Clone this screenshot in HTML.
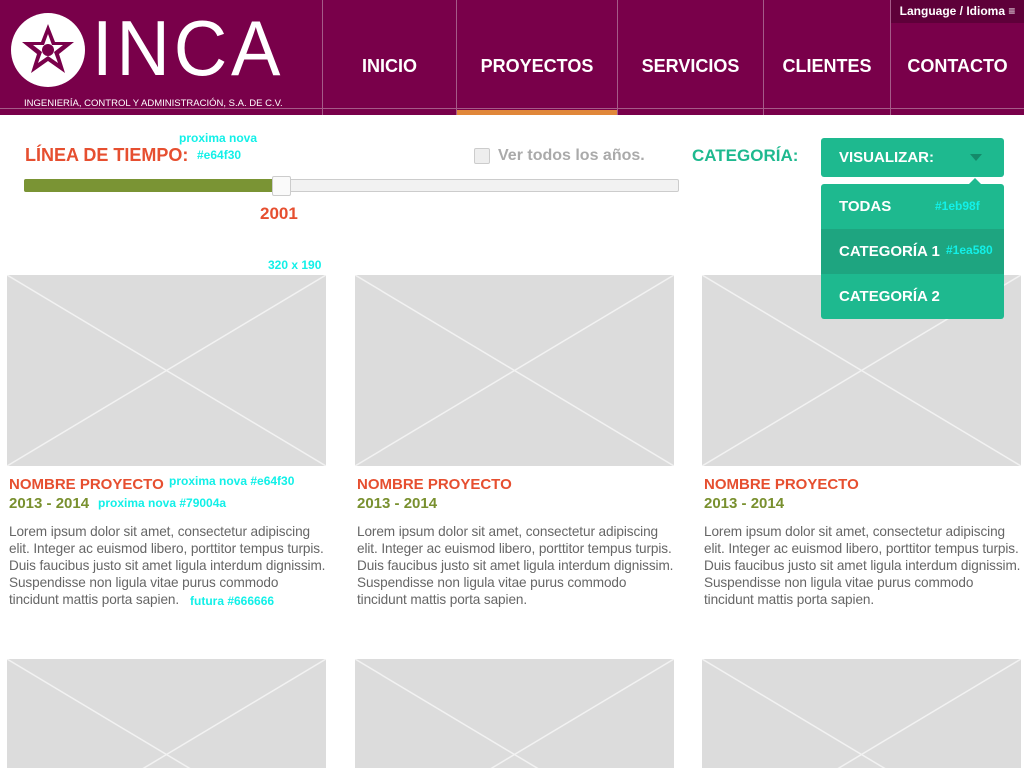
<!DOCTYPE html>
<html><head><meta charset="utf-8"><style>
*{margin:0;padding:0;box-sizing:border-box}
html,body{width:1024px;height:768px;overflow:hidden}
body{background:#fff;font-family:"Liberation Sans",sans-serif;position:relative}
.hdr{position:absolute;left:0;top:0;width:1024px;height:110px;background:#79004a}
.line{position:absolute;left:0;top:108px;width:1024px;height:1px;background:#a55a88}
.sub{position:absolute;left:0;top:109px;width:1024px;height:6px;background:#79004a}
.nav{position:absolute;top:0;height:115px;border-left:1px solid #a55a88;color:#fff;font-weight:bold;font-size:18px;text-align:center;line-height:132px}
.orange{position:absolute;left:457px;top:110px;width:160px;height:5px;background:#e0873a}
.lang{position:absolute;left:891px;top:0;width:133px;height:23px;background:#5e0039;color:#fff;font-size:12px;font-weight:bold;line-height:23px;text-align:center}
.ann{position:absolute;color:#12f0e8;font-size:12px;font-weight:bold;z-index:5}
.img{position:absolute;width:319px;height:191px;background:#dcdcdc;overflow:hidden}
.img.b{height:109px}
.t{position:absolute;color:#e64f30;font-weight:bold;font-size:15px}
.y{position:absolute;color:#79902f;font-weight:bold;font-size:15px}
.p{position:absolute;white-space:nowrap;color:#666;font-size:13.6px;line-height:17px;letter-spacing:-0.1px}
.dd{position:absolute;left:821px;width:183px;height:45px;background:#1eb98f;color:#fff;font-weight:bold;font-size:15px;line-height:45px;padding-left:18px;z-index:4}
</style></head><body>
<div class="hdr"></div><div class="line"></div><div class="sub"></div>
<svg style="position:absolute;left:8px;top:10px" width="80" height="80" viewBox="0 0 80 80">
<circle cx="40" cy="40" r="37" fill="#fff"/>
<polygon points="40,14 47,32 66,32 51,44 57,63 40,51 23,63 29,44 14,32 33,32" fill="#79004a"/>
<polygon points="40,24 44,35 55,35 46,42 50,53 40,46 30,53 34,42 25,35 36,35" fill="#fff"/>
<circle cx="40" cy="40" r="6" fill="#79004a"/>
</svg>
<div style="position:absolute;left:92px;top:6px;color:#fff;font-size:78px;font-weight:normal;letter-spacing:4px;line-height:84px;transform:scaleX(0.95);transform-origin:left">INCA</div>
<div style="position:absolute;left:24px;top:98px;color:#fff;font-size:9.5px">INGENIERÍA, CONTROL Y ADMINISTRACIÓN, S.A. DE C.V.</div>
<div class="nav" style="left:322px;width:134px">INICIO</div>
<div class="nav" style="left:456px;width:161px">PROYECTOS</div>
<div class="nav" style="left:617px;width:146px">SERVICIOS</div>
<div class="nav" style="left:763px;width:127px">CLIENTES</div>
<div class="nav" style="left:890px;width:134px">CONTACTO</div>
<div class="orange"></div>
<div class="lang">Language / Idioma ≡</div>

<div style="position:absolute;left:25px;top:145px;color:#e64f30;font-weight:bold;font-size:18px">LÍNEA DE TIEMPO:</div>
<div class="ann" style="left:179px;top:131px">proxima nova</div>
<div class="ann" style="left:197px;top:148px">#e64f30</div>
<div style="position:absolute;left:474px;top:148px;width:16px;height:16px;border:1px solid #ccc;border-radius:2px;background:#eee"></div>
<div style="position:absolute;left:498px;top:147px;color:#aaa;font-weight:bold;font-size:16px">Ver todos los años.</div>
<div style="position:absolute;left:24px;top:179px;width:655px;height:13px;background:#f2f2f2;border:1px solid #ccc;border-radius:2px"></div>
<div style="position:absolute;left:24px;top:179px;width:258px;height:13px;background:#7a9434;border-radius:2px"></div>
<div style="position:absolute;left:272px;top:176px;width:19px;height:20px;background:#fafafa;border:1px solid #ccc;border-radius:2px"></div>
<div style="position:absolute;left:260px;top:204px;color:#e64f30;font-weight:bold;font-size:17px">2001</div>

<div style="position:absolute;left:692px;top:146px;color:#1eb98f;font-weight:bold;font-size:17px">CATEGORÍA:</div>
<div style="position:absolute;left:821px;top:138px;width:183px;height:39px;background:#1eb98f;border-radius:3px;color:#fff;font-weight:bold;font-size:15px;line-height:39px;padding-left:18px">VISUALIZAR:</div>
<div style="position:absolute;left:970px;top:154px;width:0;height:0;border-left:6px solid transparent;border-right:6px solid transparent;border-top:7px solid #148a6a"></div>
<div style="position:absolute;left:969px;top:178px;width:0;height:0;border-left:6px solid transparent;border-right:6px solid transparent;border-bottom:6px solid #1eb98f"></div>
<div class="dd" style="top:184px;border-radius:3px 3px 0 0">TODAS</div>
<div class="dd" style="top:229px;background:#1ea580">CATEGORÍA 1</div>
<div class="dd" style="top:274px;border-radius:0 0 3px 3px">CATEGORÍA 2</div>
<div class="ann" style="left:935px;top:199px">#1eb98f</div>
<div class="ann" style="left:946px;top:243px">#1ea580</div>

<div class="ann" style="left:268px;top:258px">320 x 190</div>

<div class="img" style="left:7px;top:275px"><svg width="319" height="191"><line x1="0" y1="0" x2="319" y2="191" stroke="#f2f2f2" stroke-width="1.5"/><line x1="319" y1="0" x2="0" y2="191" stroke="#f2f2f2" stroke-width="1.5"/></svg></div>
<div class="img" style="left:355px;top:275px"><svg width="319" height="191"><line x1="0" y1="0" x2="319" y2="191" stroke="#f2f2f2" stroke-width="1.5"/><line x1="319" y1="0" x2="0" y2="191" stroke="#f2f2f2" stroke-width="1.5"/></svg></div>
<div class="img" style="left:702px;top:275px"><svg width="319" height="191"><line x1="0" y1="0" x2="319" y2="191" stroke="#f2f2f2" stroke-width="1.5"/><line x1="319" y1="0" x2="0" y2="191" stroke="#f2f2f2" stroke-width="1.5"/></svg></div>
<div class="img b" style="left:7px;top:659px"><svg width="319" height="191"><line x1="0" y1="0" x2="319" y2="191" stroke="#f2f2f2" stroke-width="1.5"/><line x1="319" y1="0" x2="0" y2="191" stroke="#f2f2f2" stroke-width="1.5"/></svg></div>
<div class="img b" style="left:355px;top:659px"><svg width="319" height="191"><line x1="0" y1="0" x2="319" y2="191" stroke="#f2f2f2" stroke-width="1.5"/><line x1="319" y1="0" x2="0" y2="191" stroke="#f2f2f2" stroke-width="1.5"/></svg></div>
<div class="img b" style="left:702px;top:659px"><svg width="319" height="191"><line x1="0" y1="0" x2="319" y2="191" stroke="#f2f2f2" stroke-width="1.5"/><line x1="319" y1="0" x2="0" y2="191" stroke="#f2f2f2" stroke-width="1.5"/></svg></div>

<div class="t" style="left:9px;top:476px">NOMBRE PROYECTO</div>
<div class="y" style="left:9px;top:495px">2013 - 2014</div>
<div class="p" style="left:9px;top:523px">Lorem ipsum dolor sit amet, consectetur adipiscing<br>elit. Integer ac euismod libero, porttitor tempus turpis.<br>Duis faucibus justo sit amet ligula interdum dignissim.<br>Suspendisse non ligula vitae purus commodo<br>tincidunt mattis porta sapien.</div>
<div class="ann" style="left:169px;top:474px">proxima nova #e64f30</div>
<div class="ann" style="left:98px;top:496px">proxima nova #79004a</div>
<div class="ann" style="left:190px;top:594px">futura #666666</div>

<div class="t" style="left:357px;top:476px">NOMBRE PROYECTO</div>
<div class="y" style="left:357px;top:495px">2013 - 2014</div>
<div class="p" style="left:357px;top:523px">Lorem ipsum dolor sit amet, consectetur adipiscing<br>elit. Integer ac euismod libero, porttitor tempus turpis.<br>Duis faucibus justo sit amet ligula interdum dignissim.<br>Suspendisse non ligula vitae purus commodo<br>tincidunt mattis porta sapien.</div>

<div class="t" style="left:704px;top:476px">NOMBRE PROYECTO</div>
<div class="y" style="left:704px;top:495px">2013 - 2014</div>
<div class="p" style="left:704px;top:523px">Lorem ipsum dolor sit amet, consectetur adipiscing<br>elit. Integer ac euismod libero, porttitor tempus turpis.<br>Duis faucibus justo sit amet ligula interdum dignissim.<br>Suspendisse non ligula vitae purus commodo<br>tincidunt mattis porta sapien.</div>
</body></html>
